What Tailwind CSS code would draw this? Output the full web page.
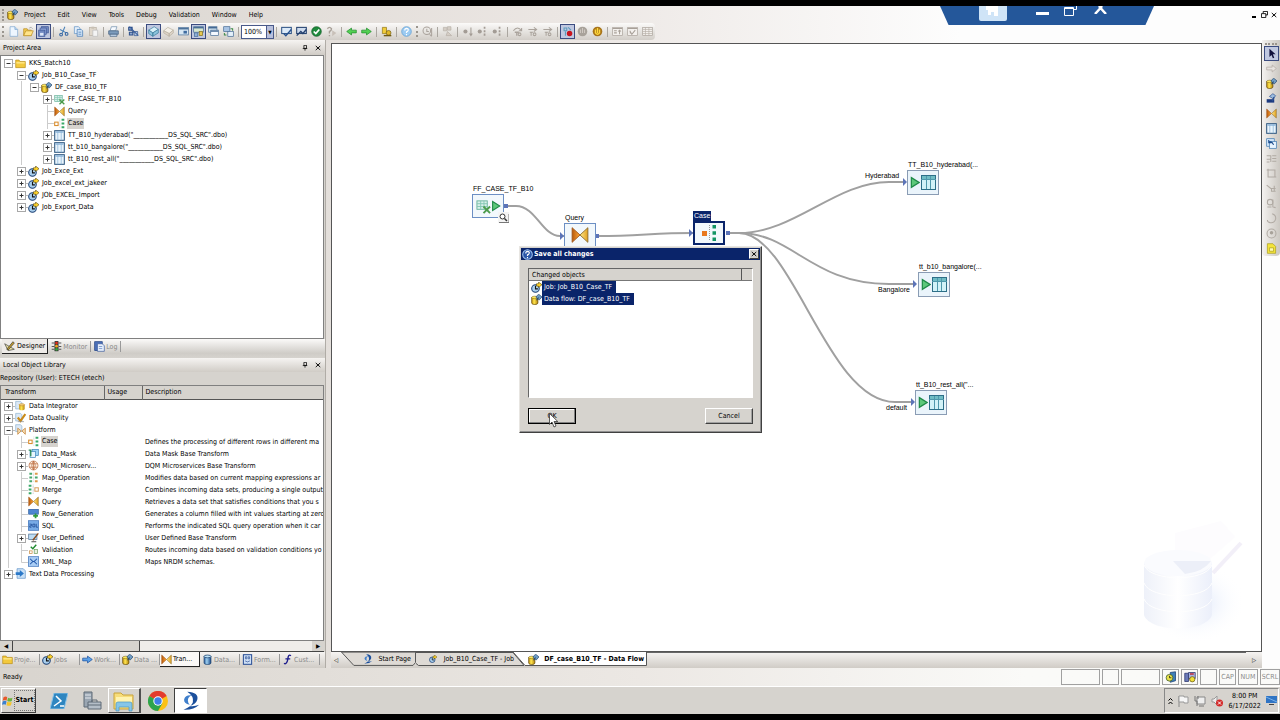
<!doctype html>
<html lang="en">
<head>
  <meta charset="UTF-8">
  <meta name="viewport" content="width=device-width, initial-scale=1.0">
  <title>Data Services Designer</title>
  <script src="https://cdn.jsdelivr.net/npm/@tailwindcss/browser@4"></script>
</head>
<body class="bg-black">
<!--Icon set-->
<svg class="absolute size-0">
  <defs>
    <linearGradient id="g-cyl" x1="0" x2="1"><stop offset="0" stop-color="#c8950f"/><stop offset=".4" stop-color="#ffe650"/><stop offset="1" stop-color="#b8860b"/></linearGradient>
    <linearGradient id="g-blue" x1="0" x2="1"><stop offset="0" stop-color="#2b5fa0"/><stop offset=".4" stop-color="#9fd0f0"/><stop offset="1" stop-color="#1c4a8a"/></linearGradient>
    <linearGradient id="g-wm" x1="0" x2="1"><stop offset="0" stop-color="#eef1f9"/><stop offset=".5" stop-color="#ffffff"/><stop offset="1" stop-color="#ebeffa"/></linearGradient>
    <radialGradient id="g-halo"><stop offset="0" stop-color="#dbe5fa"/><stop offset="1" stop-color="#ffffff" stop-opacity="0"/></radialGradient>
    <linearGradient id="g-or" x1="0" x2="1"><stop offset="0" stop-color="#b8590c"/><stop offset="1" stop-color="#ffa93a"/></linearGradient>
    <linearGradient id="g-ye" x1="0" x2="1"><stop offset="0" stop-color="#ffe98a"/><stop offset="1" stop-color="#e0a020"/></linearGradient>
  </defs>
  <symbol id="plus" viewBox="0 0 13 12"><path d="M11 6.500h2" stroke="#bbb"/><rect x="2.500" y="2.500" width="8" height="8" fill="#fff" stroke="#a8a8a8"/><path d="M4.500 6.500h4M6.500 4.500v4" stroke="#333"/></symbol>
  <symbol id="minus" viewBox="0 0 13 12"><path d="M11 6.500h2" stroke="#bbb"/><rect x="2.500" y="2.500" width="8" height="8" fill="#fff" stroke="#a8a8a8"/><path d="M4.500 6.500h4" stroke="#333"/></symbol>
  <symbol id="line" viewBox="0 0 13 12"><path d="M6.500 0v12" stroke="#ccc"/></symbol>
  <symbol id="tee" viewBox="0 0 13 12"><path d="M6.500 0v12M6.500 6.500h6.500" stroke="#ccc"/></symbol>
  <symbol id="elbow" viewBox="0 0 13 12"><path d="M6.500 0v6.500h6.500" stroke="#ccc" fill="none"/></symbol>
  <symbol id="folder" viewBox="0 0 16 16"><path d="M1 3h5l1 2h8v9H1z" fill="#f3c93c" stroke="#b88d1c"/><path d="M2 7h12" stroke="#ffe88a" stroke-width="2"/></symbol>
  <symbol id="job" viewBox="0 0 16 16"><circle cx="6.500" cy="9.500" r="5.500" fill="#a9cfee" stroke="#1b3f73" stroke-width="1.500"/><path d="M6.500 5.500v4.500h3.500" stroke="#111" fill="none" stroke-width="1.500"/><path d="M8 6V2.500h3V0l5 4-5 4V6z" fill="#ffd42a" stroke="#4a3800" stroke-width=".8"/></symbol>
  <symbol id="flow" viewBox="0 0 16 16"><path d="M1 5v8c0 3 9 3 9 0V5z" fill="url(#g-cyl)" stroke="#5a4200"/><ellipse cx="5.500" cy="5" rx="4.500" ry="1.800" fill="#ffe95a" stroke="#5a4200" stroke-width=".6"/><path d="M7 4.500l4-4.300 5 4-4 4.500z" fill="#6f9cc4" stroke="#24486e"/><path d="M8 9l3-4" stroke="#24486e" stroke-width="1.500"/></symbol>
  <symbol id="file" viewBox="0 0 16 16"><rect x="1" y="2" width="11" height="9" fill="#d9f0ea" stroke="#6ab49c"/><path d="M1 5h11M1 8h11M5 2v9M8.500 2v9" stroke="#84c8b4"/><path d="M8 8l7 7M15 8l-7 7" stroke="#4b9b4b" stroke-width="2"/></symbol>
  <symbol id="query" viewBox="0 0 16 16"><path d="M1 1.500L8 8l-7 6.500z" fill="url(#g-or)" stroke="#a0561a" stroke-width=".8"/><path d="M15 1.500L8 8l7 6.500z" fill="url(#g-ye)" stroke="#8a6a2a" stroke-width=".8"/></symbol>
  <symbol id="case" viewBox="0 0 16 16"><rect x="1" y="6" width="5" height="5" fill="#fff" stroke="#d88a28" stroke-width="1.500"/><path d="M8.500 1v14" stroke="#bbb" stroke-dasharray="1 1"/><path d="M11 1h4v3h-4zM11 6.500h4v3h-4zM11 12h4v3h-4z" fill="#38a868"/></symbol>
  <symbol id="casebig" viewBox="0 0 16 16"><rect x="1" y="6" width="5" height="5" fill="#e8781e"/><path d="M8.500 0v16" stroke="#999" stroke-dasharray="1 1"/><path d="M11.500 0h3.500v3.500h-3.500zM11.500 6.200h3.500v3.500h-3.500zM11.500 12.500h3.500v3.500h-3.500z" fill="#129464"/></symbol>
  <symbol id="table" viewBox="0 0 16 16"><rect x="1" y="1" width="14" height="14" fill="#e9f4fc" stroke="#2d567f" stroke-width="1.500"/><path d="M2 3h12" stroke="#8db6da" stroke-width="2"/><path d="M5.500 2v13M10.500 2v13" stroke="#86b2d8"/></symbol>
  <symbol id="grp1" viewBox="0 0 16 16"><path d="M1 2h7l2 2v9H1z" fill="#dce9f6" stroke="#8fb2d0"/><path d="M6 7v6c0 2.500 8 2.500 8 0V7z" fill="url(#g-cyl)"/><ellipse cx="10" cy="7" rx="4" ry="1.500" fill="#f9d98a" stroke="#c08a2a"/></symbol>
  <symbol id="grp2" viewBox="0 0 16 16"><path d="M1 2h7l2 2v9H1z" fill="#dce9f6" stroke="#8fb2d0"/><path d="M4 8l4 5 7-10" stroke="#c98a1a" stroke-width="3" fill="none"/><path d="M4 14h9" stroke="#888"/></symbol>
  <symbol id="grp3" viewBox="0 0 16 16"><path d="M1 1h7l2 2v8H1z" fill="#dce9f6" stroke="#8fb2d0"/><path d="M4 6l5 4-5 5zM15 6l-5 4 5 5z" fill="#f5dcb0" stroke="#c07a2a"/></symbol>
  <symbol id="grp4" viewBox="0 0 16 16"><path d="M3 1h9l3 3v11H3z" fill="#c9e0f6" stroke="#5d92c8"/><path d="M1 6h6V3l6 5-6 5v-3H1z" fill="#2a78c8"/></symbol>
  <symbol id="mask" viewBox="0 0 16 16"><rect x="6" y="2" width="9" height="9" fill="#9fd4f4" stroke="#3a82b8"/><rect x="3" y="5" width="8" height="9" fill="#e8f6ff" stroke="#3a82b8"/><path d="M1 3h3v9" stroke="#2e8b57" stroke-width="2" fill="none"/></symbol>
  <symbol id="globe" viewBox="0 0 16 16"><circle cx="8" cy="8" r="6.500" fill="#fdf0e2" stroke="#b9683a"/><path d="M2 5.500h12M2 10.500h12M8 1.500v13M8 1.500q-5 6.500 0 13M8 1.500q5 6.500 0 13" stroke="#b9683a" fill="none"/></symbol>
  <symbol id="mapop" viewBox="0 0 16 16"><path d="M2 1h4v3H2zM2 6.500h4v3H2zM2 12h4v3H2z" fill="#4aa870"/><path d="M10 1h4v3h-4zM10 12h4v3h-4z" fill="#e09a4a"/><path d="M10 6.500h4v3h-4z" fill="#4aa870"/><path d="M8 1v14" stroke="#bbb" stroke-dasharray="1 1"/></symbol>
  <symbol id="merge" viewBox="0 0 16 16"><path d="M1 1h4v3H1zM1 6.500h4v3H1zM1 12h4v3H1z" fill="#38a868"/><path d="M7.500 1v14" stroke="#999" stroke-dasharray="1 1"/><rect x="10" y="5.500" width="5" height="5" fill="#fff" stroke="#d8a060" stroke-width="1.500"/></symbol>
  <symbol id="rowgen" viewBox="0 0 16 16"><rect x="1" y="2" width="14" height="7" fill="#4c86d0" stroke="#2a5ca0"/><path d="M11 8v7M7.500 11.500h7" stroke="#2e9a3a" stroke-width="2.500"/></symbol>
  <symbol id="sql" viewBox="0 0 16 16"><rect x=".5" y="1" width="15" height="14" fill="#78abe6" stroke="#3a70b8"/><path d="M2 6h3v2.500H2.500v2H5M7 6h3v4H7zM12 5.500v5h2.500" stroke="#123f8a" fill="none"/></symbol>
  <symbol id="userdef" viewBox="0 0 16 16"><rect x="1" y="3" width="12" height="8" fill="#bcdcf4" stroke="#4a6c92"/><path d="M5 14h7" stroke="#777" stroke-width="2"/><path d="M7 12l8-10" stroke="#8a4a1a" stroke-width="2"/></symbol>
  <symbol id="valid" viewBox="0 0 16 16"><path d="M4 4l3 3 5-6" stroke="#1e8a2e" stroke-width="2" fill="none"/><rect x="2" y="10" width="4" height="4" fill="#fff" stroke="#c9883a"/><rect x="9" y="8" width="5" height="6" fill="#e8f0e0" stroke="#6a9a5a"/></symbol>
  <symbol id="xml" viewBox="0 0 16 16"><rect x=".5" y="1" width="15" height="14" fill="#a8ccf4" stroke="#3a70b8"/><path d="M3 4l4 4-4 4M13 4L9 8l4 4M7 8h2" stroke="#1c54a8" fill="none" stroke-width="1.500"/></symbol>
  <symbol id="db" viewBox="0 0 16 16"><path d="M3 3v10c0 3 10 3 10 0V3z" fill="url(#g-blue)" stroke="#153a66"/><ellipse cx="8" cy="3.500" rx="5" ry="2" fill="#bfe2f8" stroke="#153a66"/></symbol>
  <symbol id="format" viewBox="0 0 16 16"><rect x="2" y="1" width="12" height="14" fill="#cfe0f6" stroke="#2a4f96" stroke-width="1.500"/><path d="M5 4h2v3H5zM9 4h2v3H9zM4.500 10q3.500 3 7 0" fill="none" stroke="#2a4f96"/></symbol>
  <symbol id="fx" viewBox="0 0 16 16"><path d="M13 2.500C10 0 9 3 8.500 7S6 16 3 13.500M5 7h7" stroke="#1c1c8c" stroke-width="2" fill="none"/></symbol>
  <symbol id="arrow" viewBox="0 0 16 16"><path d="M1 6h7V3l7 5-7 5v-3H1z" fill="#5aa0e8" stroke="#1c4f9a"/></symbol>
  <symbol id="swirl" viewBox="0 0 16 16"><path d="M5 .5q9.500.5 8 6.500-1 3.500-6 5 4 .5 7.500-1Q10 15.500 2 15q6.500-2.500 7.500-6Q10.500 4 5 .5z" fill="#1b4f9c"/><path d="M8.500 3.500Q5.500 4.500 5.500 7.500q0 2 1.500 3.500Q2 10 2.500 6.500 3.500 3 8.500 3.500z" fill="#3f7fcc"/></symbol>
  <symbol id="design" viewBox="0 0 16 16"><path d="M1 4l5 10 9-2z" fill="#e8e0a0" stroke="#444"/><path d="M4 12l9-11 2 2-9 10z" fill="#c9a02a" stroke="#333"/></symbol>
  <symbol id="monitor" viewBox="0 0 16 16"><rect x="5" y="0" width="6" height="15" rx="1" fill="#3c3c3c"/><path d="M1 3h4M1 8h4M11 3h4M11 8h4M1 12h4M11 12h4" stroke="#555" stroke-width="1.500"/><circle cx="8" cy="3" r="2" fill="#e02a1a"/><circle cx="8" cy="7.500" r="2" fill="#f0a81a"/><circle cx="8" cy="12" r="2" fill="#35a83a"/></symbol>
  <symbol id="log" viewBox="0 0 16 16"><rect x="1" y="1" width="11" height="13" fill="#4a6fb8" stroke="#1f3f80"/><path d="M5 4h7l3 3v8H5z" fill="#e8f0fc" stroke="#3a5a9a"/><path d="M7 8h5M7 11h5" stroke="#5a80c0"/></symbol>
  <symbol id="pin" viewBox="0 0 16 16"><path d="M5 1h7v8H5zM2 9.500h12M8 10v5" stroke="#000" stroke-width="2" fill="none"/></symbol>
  <symbol id="close" viewBox="0 0 16 16"><path d="M2 2.500l12 11M14 2.500l-12 11" stroke="#000" stroke-width="2.500"/></symbol>
  <symbol id="new" viewBox="0 0 16 16"><path d="M3 1h7l4 4v10H3z" fill="#eef6ff" stroke="#7fa8d0"/><path d="M10 1v4h4" fill="#bcd6f0" stroke="#7fa8d0"/></symbol>
  <symbol id="open" viewBox="0 0 16 16"><path d="M1 4h5l1 2h5v8H1z" fill="#f4cc50" stroke="#b88a20"/><path d="M1 14l3-7h11l-3 7z" fill="#ffe48a" stroke="#b88a20"/><path d="M9 3q3-3 5 1" stroke="#999" fill="none"/></symbol>
  <symbol id="saveall" viewBox="0 0 16 16"><rect x="5" y="1" width="10" height="9" fill="#7088c0" stroke="#3c5594"/><rect x="3" y="3" width="9" height="9" fill="#93aadb" stroke="#3c5594"/><rect x="1" y="6" width="9" height="9" fill="#7088c0" stroke="#3c5594"/><rect x="3" y="10" width="5" height="4" fill="#dfe8f8"/></symbol>
  <symbol id="cut" viewBox="0 0 16 16"><path d="M10 1L6 11M3 5l9 5" stroke="#4a80b8" stroke-width="1.500"/><circle cx="4.500" cy="12.500" r="2" fill="none" stroke="#2f62a0" stroke-width="1.500"/><circle cx="12.500" cy="11.500" r="2" fill="none" stroke="#2f62a0" stroke-width="1.500"/></symbol>
  <symbol id="copy" viewBox="0 0 16 16"><path d="M2 1h6l2 2v8H2z" fill="#e4effa" stroke="#5d90c4"/><path d="M6 5h6l2 2v8H6z" fill="#cfe2f6" stroke="#3f78b4"/><path d="M8 9h4M8 12h4" stroke="#3f78b4"/></symbol>
  <symbol id="paste" viewBox="0 0 16 16"><rect x="2" y="2" width="10" height="12" fill="#e0d8cc" stroke="#b8b0a4"/><path d="M5 1h4v3H5z" fill="#c8c0b4"/><path d="M7 6h7v9H7z" fill="#f4f4f4" stroke="#bbb"/></symbol>
  <symbol id="print" viewBox="0 0 16 16"><path d="M5 1h8l-2 6H3z" fill="#f6faff" stroke="#6d8cab"/><path d="M1 7h14v5H1z" fill="#7d9cbc" stroke="#3e5a7a"/><path d="M3 12h10v3H3z" fill="#c8dcf0" stroke="#3e5a7a"/></symbol>
  <symbol id="where" viewBox="0 0 16 16"><path d="M1 2h5v4H1zM5 6l5 4M2 9h5v4H2z" stroke="#2d4f8a" stroke-width="1.500" fill="#8fa8d0"/><path d="M9 8h5v6H9z" fill="#b8cce8" stroke="#2d4f8a"/><path d="M2 1l13 13" stroke="#3a5f9c" stroke-width="1.500"/></symbol>
  <symbol id="jobdb" viewBox="0 0 16 16"><path d="M7 2l7-1v12l-7 2z" fill="#3f7fb8" stroke="#1b3f73"/><circle cx="6" cy="9" r="4.500" fill="#e8e04a" stroke="#3a5a2a"/><path d="M6 6.500V9h2.500" stroke="#111" fill="none"/></symbol>
  <symbol id="sched" viewBox="0 0 16 16"><path d="M1 3h5v11H1z" fill="#6a7ab8" stroke="#2a346c"/><path d="M6 2h9v8H6z" fill="#a8b4e0" stroke="#2a346c"/><path d="M8 4h5" stroke="#c02a3a" stroke-width="2"/><circle cx="11" cy="11" r="3.500" fill="#f0e03a" stroke="#6a5a10"/></symbol>
  <symbol id="cube" viewBox="0 0 16 16"><path d="M1 6l8-5 6 4-8 5z" fill="#d8f0f8" stroke="#3a7c9c"/><path d="M1 6v5l6 4v-5zM7 10l8-5v5l-8 5z" fill="#8cc4dc" stroke="#3a7c9c"/></symbol>
  <symbol id="cubeoff" viewBox="0 0 16 16"><path d="M1 7l6-5 8 4-6 5z" fill="#f4f0e8" stroke="#b8b0a0"/><path d="M1 7v3l8 5v-4zM9 11l6-5v4l-6 5z" fill="#ddd4c8" stroke="#b8b0a0"/></symbol>
  <symbol id="win" viewBox="0 0 16 16"><rect x="1" y="2" width="14" height="11" fill="#d8e8f4" stroke="#446a94"/><path d="M1 4h14" stroke="#446a94" stroke-width="2"/><rect x="8" y="7" width="5" height="4" fill="#3f6ca0"/></symbol>
  <symbol id="wins" viewBox="0 0 16 16"><rect x="1" y="1" width="14" height="8" fill="#d8e8d0" stroke="#446a94"/><path d="M1 2.500h14" stroke="#446a94" stroke-width="2"/><rect x="2" y="10" width="5" height="5" fill="#8fb0d8" stroke="#446a94"/><rect x="9" y="8" width="5" height="6" fill="#e8c850" stroke="#807020"/></symbol>
  <symbol id="cascade" viewBox="0 0 16 16"><rect x="1" y="1" width="12" height="8" fill="#d8e8f4" stroke="#446a94"/><rect x="4" y="6" width="11" height="8" fill="#f4f9ff" stroke="#446a94"/><path d="M1 2.500h12M4 7.500h11" stroke="#446a94" stroke-width="2"/></symbol>
  <symbol id="tile" viewBox="0 0 16 16"><rect x="1" y="1" width="9" height="7" fill="#a8c4e4" stroke="#446a94"/><rect x="7" y="8" width="8" height="7" fill="#e4f0fa" stroke="#446a94"/><path d="M11 4h3v3M2 10v3h3" stroke="#3f8a4a" stroke-width="1.500" fill="none"/></symbol>
  <symbol id="chk" viewBox="0 0 16 16"><rect x="1" y="2" width="14" height="9" fill="#dceaf8" stroke="#2f5486" stroke-width="1.500"/><path d="M4 11l3 3 8-9" stroke="#24508f" stroke-width="2" fill="none"/></symbol>
  <symbol id="chk2" viewBox="0 0 16 16"><rect x="1" y="2" width="14" height="9" fill="#cfdcee" stroke="#22406e" stroke-width="1.500"/><path d="M1 14l6-6 3 3 5-6" stroke="#24406f" stroke-width="2" fill="none"/></symbol>
  <symbol id="ok" viewBox="0 0 16 16"><circle cx="8" cy="8" r="7" fill="#1f8a3c" stroke="#0e5a24"/><path d="M4 8l3 3 5-6" stroke="#fff" stroke-width="2.500" fill="none"/></symbol>
  <symbol id="helpoff" viewBox="0 0 16 16"><path d="M2 4q3-4 6 0 0 3-3 4v3M5 13v2" stroke="#a8a098" stroke-width="2" fill="none"/><path d="M9 6l6 4-6 5z" fill="#c8c0b8"/></symbol>
  <symbol id="left" viewBox="0 0 16 16"><path d="M15 6H8V3L1 8l7 5v-3h7z" fill="#52d052" stroke="#1f8a2a"/></symbol>
  <symbol id="right" viewBox="0 0 16 16"><path d="M1 6h7V3l7 5-7 5v-3H1z" fill="#52d052" stroke="#1f8a2a"/></symbol>
  <symbol id="gold" viewBox="0 0 16 16"><path d="M2 2h6v9H2z" fill="#f0cc3a" stroke="#907414"/><circle cx="11" cy="10" r="3.500" fill="#e0b82a" stroke="#705a10"/><path d="M4 14h11" stroke="#705a10" stroke-width="2"/></symbol>
  <symbol id="help" viewBox="0 0 16 16"><circle cx="8" cy="8" r="7" fill="#9ccbf2" stroke="#5b9bd0"/><path d="M5.500 6.500q0-3 2.700-3 2.600.2 2.300 2.500Q10 8 8 8.500V10M8 11.500v2" stroke="#fff" stroke-width="1.700" fill="none"/></symbol>
  <symbol id="ask" viewBox="0 0 16 16"><circle cx="8" cy="8" r="7" fill="#2a56a8" stroke="#9cc0ee" stroke-width="1.500"/><path d="M5.500 6.500q0-3 2.700-3 2.600.2 2.300 2.500Q10 8 8 8.500V10M8 11.500v2" stroke="#fff" stroke-width="1.700" fill="none"/></symbol>
  <symbol id="clockoff" viewBox="0 0 16 16"><circle cx="7" cy="7" r="5.500" fill="none" stroke="#aaa39c" stroke-width="1.500"/><path d="M7 4v4h3M14 3v11M11 12l3 3" stroke="#aaa39c" stroke-width="1.500" fill="none"/></symbol>
  <symbol id="nodeoff" viewBox="0 0 16 16"><path d="M2 2h5v5H2zM8 1h5v5H8zM8 8l6 6H6z" fill="#d4cdc5" stroke="#b8b0a8"/></symbol>
  <symbol id="step1" viewBox="0 0 16 16"><circle cx="5" cy="8" r="3" fill="#a39c95"/><path d="M13 2v12M11 11l2 3 2-3" stroke="#a39c95" stroke-width="1.500" fill="none"/></symbol>
  <symbol id="step2" viewBox="0 0 16 16"><circle cx="4" cy="8" r="3" fill="#a39c95"/><path d="M11 1v14" stroke="#a39c95" stroke-width="2.500" stroke-dasharray="3 2"/></symbol>
  <symbol id="hop" viewBox="0 0 16 16"><path d="M2 7q6-8 12 0M14 3v4h-4" stroke="#aaa39c" stroke-width="1.500" fill="none"/><path d="M4 9h6M7 9v5" stroke="#aaa39c" stroke-width="2"/><circle cx="11" cy="12" r="2" fill="none" stroke="#aaa39c" stroke-width="1.500"/></symbol>
  <symbol id="hop2" viewBox="0 0 16 16"><path d="M2 5h11M10 2l4 3-4 3M4 9h5M6 9v5" stroke="#aaa39c" stroke-width="1.500" fill="none"/><circle cx="11" cy="12" r="2" fill="none" stroke="#aaa39c" stroke-width="1.500"/></symbol>
  <symbol id="debug" viewBox="0 0 16 16"><path d="M3 3h4v4H3zM9 2l4 4M5 8v6" stroke="#5a9abc" stroke-width="1.500" fill="none"/><circle cx="11" cy="11" r="4" fill="#c8141e"/></symbol>
  <symbol id="handoff" viewBox="0 0 16 16"><circle cx="8" cy="8" r="7" fill="#a8a29a"/><path d="M5 5v5M8 3v7M11 5v5" stroke="#cfc9c2" stroke-width="1.500"/></symbol>
  <symbol id="hand" viewBox="0 0 16 16"><circle cx="8" cy="8" r="7" fill="#a8741a"/><path d="M5 5v5q3 4 6 0V5M8 3v7" stroke="#ffd83a" stroke-width="2" fill="none"/></symbol>
  <symbol id="gridoff" viewBox="0 0 16 16"><rect x="1" y="2" width="14" height="12" fill="#f4f1ee" stroke="#a8a098"/><path d="M1 5h14M1 8h14M1 11h14M5 2v12M10 2v12" stroke="#b8b0a8"/></symbol>
  <symbol id="varoff" viewBox="0 0 16 16"><rect x="1" y="2" width="14" height="12" fill="#f4f1ee" stroke="#a8a098"/><path d="M1 3.500h14M3 7h4M3 10h4M11 12V6M9 8l2-2 2 2" stroke="#a8a098" stroke-width="1.500" fill="none"/></symbol>
  <symbol id="winoff" viewBox="0 0 16 16"><rect x="1" y="2" width="14" height="12" fill="#f4f1ee" stroke="#a8a098"/><path d="M1 3.500h14M4 7l3 5 5-6M4 10h2" stroke="#a8a098" stroke-width="1.500" fill="none"/></symbol>
  <symbol id="pointer" viewBox="0 0 16 16"><path d="M5 1v12l3-3 2 5 2-1-2-5h4z" fill="#10103c"/></symbol>
  <symbol id="arrowoff" viewBox="0 0 16 16"><path d="M1 6h8V3l6 5-6 5v-3H1z" fill="#e8e4e0" stroke="#b0a8a0"/></symbol>
  <symbol id="flowblue" viewBox="0 0 16 16"><path d="M1 9h11v5H1z" fill="#1c3a80"/><path d="M5 5l5-4 4 3-4 4z" fill="#9cbde0" stroke="#2a4f90"/><path d="M12 6l-3 6" stroke="#2a4f90" stroke-width="2"/></symbol>
  <symbol id="tmpl" viewBox="0 0 16 16"><rect x="1" y="1" width="11" height="11" fill="#cfe4f8" stroke="#3e78b0"/><rect x="5" y="5" width="10" height="10" fill="#e8f4ff" stroke="#3e78b0"/><path d="M4 7q4-4 7 3M4 3v4h4" stroke="#1a4a8a" stroke-width="1.500" fill="none"/></symbol>
  <symbol id="o1" viewBox="0 0 16 16"><path d="M1 4h6v9M9 4h6M9 8h6M9 12h6M1 9h6M1 13h4" stroke="#b0aaa3" stroke-width="1.500" fill="none"/></symbol>
  <symbol id="o2" viewBox="0 0 16 16"><path d="M3 3h10v10H3zM1 3h2M13 13h2M3 1v2" stroke="#b0aaa3" stroke-width="1.500" fill="none"/></symbol>
  <symbol id="o3" viewBox="0 0 16 16"><path d="M1 3l6 5h7M8 8v4h6M12 4v8" stroke="#b0aaa3" stroke-width="1.500" fill="none"/></symbol>
  <symbol id="o4" viewBox="0 0 16 16"><circle cx="6" cy="6" r="4" fill="none" stroke="#b0aaa3" stroke-width="1.500"/><path d="M10 2v11l4 1M2 13h6" stroke="#b0aaa3" stroke-width="1.500" fill="none"/></symbol>
  <symbol id="o5" viewBox="0 0 16 16"><path d="M9 1q6 2 5 8-2 6-8 5-4-1-4-4" stroke="#b0aaa3" stroke-width="1.500" fill="none"/></symbol>
  <symbol id="o6" viewBox="0 0 16 16"><circle cx="8" cy="8" r="6.500" fill="none" stroke="#b0aaa3" stroke-width="1.500"/><circle cx="8" cy="7" r="2.500" fill="#a8a29a"/></symbol>
  <symbol id="note" viewBox="0 0 16 16"><path d="M2 1h8l4 4v10H2z" fill="#f4e43a" stroke="#a89a1a"/><path d="M5 7h6v5H5z" fill="#fffbb0" stroke="#a89a1a"/></symbol>
  <symbol id="play" viewBox="0 0 12 16"><path d="M1.500 2l9.500 6-9.500 6z" fill="#5cc87a" stroke="#1f8a48" stroke-width="1.500"/></symbol>
  <symbol id="tbl" viewBox="0 0 15 15"><rect x=".5" y=".5" width="14" height="14" fill="#d2f2f8" stroke="#2d6f88"/><path d="M1 2.500h13" stroke="#6fbcc4" stroke-width="3"/><path d="M0 4.500h15M5.500 1v13M9.500 1v13" stroke="#4f98ac"/></symbol>
</svg>

<div class="flex h-screen flex-col font-['DejaVu_Sans_Condensed','Noto_Sans',sans-serif] text-[7px] leading-[12px] text-black">
  <div class="h-1.5 shrink-0 bg-black"></div>
  <div class="relative flex min-h-0 flex-1 flex-col bg-linear-to-r from-[#d8d4ce] via-[#ece7e4] via-45% to-[#fdfdfd] to-75%">
    <!--Menu bar-->
    <nav class="flex h-[17px] shrink-0 items-center pl-[2px]">
      <span class="mr-[3px] h-3 border-l-2 border-dotted border-[#9a958e]"></span>
      <svg class="size-[11px]"><use href="#flow"/></svg>
      <div id="menus" class="flex flex-1"></div>
      <div class="flex items-center gap-[3px] pr-[3px]">
        <button aria-label="Minimize" class="flex h-2 w-[6px] items-end"><span class="mb-px h-[2px] w-1 bg-black"></span></button>
        <button aria-label="Restore"><svg class="size-[7px]" viewBox="0 0 8 8"><path d="M2.500 2.500v-2h5v4h-2M.5 3h5v4.500h-5z" fill="none" stroke="#000"/></svg></button>
        <button aria-label="Close"><svg class="size-[6px]"><use href="#close"/></svg></button>
      </div>
    </nav>
    <!--Toolbar-->
    <div class="flex h-[17px] w-max shrink-0 items-center rounded-r bg-linear-to-b from-[#fbfaf9] to-[#d2cec8]">
      <div id="tools1" class="flex items-center"></div>
      <div class="relative w-[33px]">
        <select aria-label="Zoom" class="h-[14px] w-full appearance-none border border-[#4a5a8a] bg-white pl-[2px] leading-[12px]"><option>100%</option></select>
        <span class="pointer-events-none absolute inset-y-0 right-0 flex w-2 items-center justify-center border border-[#4a5a8a] bg-[#b8c0dc] text-[5px]">▼</span>
      </div>
      <div id="tools2" class="flex items-center"></div>
    </div>

    <div class="flex min-h-0 flex-1">
      <!--Left dock-->
      <aside class="grid w-[326px] shrink-0 grid-rows-[318fr_310fr] border-r border-[#b0aca6] bg-[#d6d3ce]">
        <section class="flex min-h-0 flex-col">
          <header class="flex h-[15px] shrink-0 items-center gap-[7px] bg-linear-to-b from-[#f6f4f2] to-[#d0ccc6] pr-1 pl-[3px]">
            <h2 class="flex-1">Project Area</h2>
            <button aria-label="Auto hide"><svg class="size-[6px]"><use href="#pin"/></svg></button>
            <button aria-label="Close panel"><svg class="size-[6px]"><use href="#close"/></svg></button>
          </header>
          <div id="project" class="mr-px min-h-0 flex-1 overflow-hidden border border-[#808080] bg-white pt-[1px] pl-px"></div>
          <div id="areaTabs" class="flex h-[19px] shrink-0 bg-linear-to-b from-[#fbfaf9] via-[#cfccc7] via-75% to-[#d6d3ce] pl-[2px]"></div>
        </section>
        <section class="flex min-h-0 flex-col">
          <header class="flex h-[14px] shrink-0 items-center gap-[7px] bg-linear-to-b from-[#f6f4f2] to-[#d0ccc6] pr-1 pl-[3px]">
            <h2 class="flex-1">Local Object Library</h2>
            <button aria-label="Auto hide"><svg class="size-[6px]"><use href="#pin"/></svg></button>
            <button aria-label="Close panel"><svg class="size-[6px]"><use href="#close"/></svg></button>
          </header>
          <p class="h-[13px] shrink-0">Repository (User): ETECH (etech)</p>
          <div class="mr-px min-h-0 flex-1 overflow-hidden border border-[#808080] bg-white">
            <table class="w-full table-fixed border-collapse">
              <thead class="bg-[#d6d3ce] text-left">
                <tr class="h-[13px] border-b border-[#555]">
                  <th class="w-[103px] border-r border-[#666] pl-1 font-normal">Transform</th>
                  <th class="w-[38px] border-r border-[#666] pl-[3px] font-normal">Usage</th>
                  <th class="pl-[3px] font-normal">Description</th>
                </tr>
              </thead>
              <tbody id="library"></tbody>
            </table>
          </div>
          <div class="mr-px flex h-[11px] shrink-0 items-stretch border-b border-[#444] bg-[#efedea]">
            <button aria-label="Scroll left" class="w-3 bg-[#d6d3ce] text-[6px] leading-[10px]">◀</button>
            <span class="w-[128px] border-r border-l border-[#444] bg-[#d6d3ce]"></span>
            <span class="flex-1"></span>
            <button aria-label="Scroll right" class="w-3 bg-[#d6d3ce] text-[6px] leading-[10px]">▶</button>
          </div>
          <div id="libTabs" class="flex h-[16px] shrink-0 bg-linear-to-b from-[#f6f4f2] to-[#d0ccc6]"></div>
        </section>
      </aside>

      <!--Workspace-->
      <main class="ml-[5px] flex min-w-0 flex-1 flex-col pt-[3px]">
        <div class="relative min-h-0 flex-1 overflow-hidden border border-[#555] bg-white">
          <!--Watermark-->
          <svg class="absolute right-[6px] bottom-[8px] h-[124px] w-[112px]" viewBox="0 0 112 124">
            <ellipse cx="52" cy="84" rx="50" ry="40" fill="url(#g-halo)"/>
            <path d="M32 14l46-12 14 16-30 26-30 2z" fill="#fdfcfe"/>
            <path d="M98 24L70 54" stroke="#f2eff8" stroke-width="4"/>
            <path d="M1 44v52c6 18 62 18 68 0V44z" fill="url(#g-wm)"/>
            <ellipse cx="35" cy="44" rx="34" ry="13" fill="#fafbfe"/>
            <path d="M30 42h38q-8 11-26 13z" fill="#eceff8"/>
            <path d="M1 46c6 17 62 17 68 0M1 64c6 17 62 17 68 0M1 80c6 17 62 17 68 0" stroke="#fff" fill="none"/>
          </svg>
          <!--Links between the nodes-->
          <svg class="absolute top-0 left-0 h-full w-full">
            <g fill="none" stroke="#a0a0a0" stroke-width="2">
              <path d="M175 162h9c20 0 26 30 44 30h4"/>
              <path d="M266 192c40 0 56-3 95-3"/>
              <path d="M395 189h12c56 0 96-51 150-51h16"/>
              <path d="M395 189h12c54 0 72 51 150 51h24"/>
              <path d="M395 189h12c54 0 88 169 156 169h16"/>
            </g>
            <path d="M228 188l4 4-4 4zM357 185l4 4-4 4zM571 134l4 4-4 4zM581 236l4 4-4 4zM579 354l4 4-4 4zM172 160h4v4h-4zM263 190h4v4h-4zM394 187h4v4h-4z" fill="#5c74b8"/>
          </svg>
          <!--Source-->
          <div class="absolute top-[140px] left-[140px] font-['Liberation_Sans',sans-serif] leading-[10px]">
            <p class="pl-px">FF_CASE_TF_B10</p>
            <div class="relative flex h-6 w-8 items-center justify-center border border-[#6c8fc4] bg-[#f2f8fc]">
              <svg class="size-[15px]"><use href="#file"/></svg>
              <svg class="h-3 w-[10px]"><use href="#play"/></svg>
              <svg class="absolute -right-[6px] -bottom-[6px] size-[11px]" viewBox="0 0 11 11"><rect width="11" height="11" fill="#f4f4f4"/><path d="M11 2v8.500H1" fill="none" stroke="#777"/><circle cx="4.500" cy="4.500" r="2.500" fill="#fff" stroke="#333"/><path d="M6.500 6.500l2.500 2.500" stroke="#333" stroke-width="1.500"/></svg>
            </div>
          </div>
          <div class="absolute top-[169px] left-[232px] font-['Liberation_Sans',sans-serif] leading-[10px]">
            <p class="pl-px">Query</p>
            <div class="flex h-6 w-8 items-center justify-center border border-[#6c8fc4] bg-[#f2f8fc]"><svg class="size-[18px]"><use href="#query"/></svg></div>
          </div>
          <div class="absolute top-[167px] left-[361px] font-['Liberation_Sans',sans-serif] leading-[10px]">
            <p class="w-max bg-[#0a246a] px-px text-white">Case</p>
            <div class="flex h-6 w-8 items-center justify-center border-2 border-[#0a246a] bg-[#f2f8fc]"><svg class="size-[16px]"><use href="#casebig"/></svg></div>
          </div>
          <!--Targets-->
          <div id="targets"></div>

          <!--Save dialog-->
          <div role="dialog" aria-labelledby="saveTitle" class="absolute top-[202px] left-[187px] flex w-[243px] flex-col border border-t-[#e8e6e2] border-r-[#404040] border-b-[#404040] border-l-[#e8e6e2] bg-[#d6d3ce] shadow-[inset_-1px_-1px_#909090]">
            <header class="m-px flex h-3 items-center gap-px bg-[#0a246a] px-px text-white">
              <svg class="size-[11px]"><use href="#ask"/></svg>
              <h2 id="saveTitle" class="flex-1 font-bold">Save all changes</h2>
              <button aria-label="Close dialog" class="flex size-[10px] items-center justify-center border border-r-[#404040] border-b-[#404040] border-white bg-[#d6d3ce]"><svg class="size-[6px]"><use href="#close"/></svg></button>
            </header>
            <div class="flex flex-col px-2 pt-[7px] pb-2">
              <div class="h-[130px] border border-t-[#666] border-r-white border-b-white border-l-[#666] bg-white">
                <div class="flex h-3 items-center border-b border-[#777] bg-[#d6d3ce]"><span class="flex-1 pl-[3px]">Changed objects</span><span class="h-full w-[11px] border-l border-[#555]"></span></div>
                <ul class="pl-[2px] text-white">
                  <li class="flex h-3 items-center"><svg class="size-[11px]"><use href="#job"/></svg><span class="h-3 bg-[#0a246a] pr-1 pl-[2px]">Job: Job_B10_Case_TF</span></li>
                  <li class="flex h-3 items-center"><svg class="size-[11px]"><use href="#flow"/></svg><span class="h-3 bg-[#0a246a] pr-1 pl-[2px]">Data flow: DF_case_B10_TF</span></li>
                </ul>
              </div>
              <div class="mt-[10px] flex justify-between">
                <button class="h-4 w-12 border border-black bg-[#d6d3ce] leading-[12px] shadow-[inset_-1px_-1px_#808080,inset_1px_1px_#fff]">OK</button>
                <button class="h-4 w-12 border border-t-white border-r-[#404040] border-b-[#404040] border-l-white bg-[#d6d3ce] leading-[12px] shadow-[inset_-1px_-1px_#a0a0a0]">Cancel</button>
              </div>
            </div>
          </div>
          <svg class="absolute top-[369px] left-[217px] h-[15px] w-[10px]" viewBox="0 0 10 15"><path d="M.5.5v11l2.500-2.500 2 5 2-1-2-4.500h3.800z" fill="#fff" stroke="#333" stroke-width=".8"/></svg>
        </div>
        <!--Document tabs-->
        <div class="flex h-4 shrink-0 items-center bg-linear-to-b from-[#f6f4f2] to-[#d0ccc6]">
          <button aria-label="Previous tab" class="w-[10px] text-[6px] leading-[12px]">◁</button>
          <div class="flex h-full items-start">
            <button class="relative flex h-[14px] w-[75px] items-center justify-end gap-[5px] pr-[5px] font-medium">
              <svg class="absolute inset-0 size-full" viewBox="0 0 76 14"><path d="M.5 0L13 13.500h60l2.500-3V0z" fill="#dedad5" stroke="#555"/></svg>
              <svg class="relative size-[10px]"><use href="#swirl"/></svg><span class="relative">Start Page</span>
            </button>
            <button class="relative flex h-[14px] w-[108px] items-center justify-end gap-[7px] pr-[10px] font-medium">
              <svg class="absolute inset-0 size-full" viewBox="0 0 108 14"><path d="M-.5 0v11l3 2.500H108L97 .5H0" fill="#dedad5" stroke="#555"/></svg>
              <svg class="relative size-[8px]"><use href="#job"/></svg><span class="relative">Job_B10_Case_TF - Job</span>
            </button>
            <button class="relative -ml-[11px] flex h-[14px] w-[134px] items-center justify-end gap-[5px] pr-[3px] font-bold">
              <svg class="absolute inset-0 size-full" viewBox="0 0 134 14"><path d="M0 0l12 13.500h121.500V0" fill="#fff" stroke="#555"/></svg>
              <svg class="relative size-[11px]"><use href="#flow"/></svg><span class="relative">DF_case_B10_TF - Data Flow</span>
            </button>
          </div>
          <span class="h-full flex-1 border-t border-[#666]"></span>
          <button aria-label="Next tab" class="w-4 text-[6px] leading-[12px]">▷</button>
        </div>
      </main>

      <!--Tool palette-->
      <div class="w-[18px] shrink-0 bg-[#fdfdfd]">
        <div id="palette" class="flex flex-col items-center rounded-b bg-linear-to-r from-[#f4f2f0] to-[#ccc8c2] pt-[2px]"></div>
      </div>
    </div>

    <!--Status bar-->
    <footer class="flex h-[18px] shrink-0 items-center gap-[2px] bg-linear-to-r from-[#d8d4ce] via-[#ece8e4] via-50% to-[#fafaf8] to-80% text-[#8a8a8a]">
      <span class="flex-1 pl-[3px] text-black">Ready</span>
      <span class="h-4 w-[39px] border border-[#a0a0a0]"></span>
      <span class="h-4 w-[17px] border border-[#a0a0a0]"></span>
      <span class="h-4 w-[39px] border border-[#a0a0a0]"></span>
      <span class="flex h-4 w-[17px] items-center justify-center border border-[#a0a0a0]"><svg class="size-3"><use href="#jobdb"/></svg></span>
      <span class="flex h-4 w-[17px] items-center justify-center border border-[#a0a0a0]"><svg class="size-3"><use href="#sched"/></svg></span>
      <span class="h-4 w-[17px] border border-[#a0a0a0]"></span>
      <span class="h-4 w-[17px] border border-[#a0a0a0] text-center leading-[15px]">CAP</span>
      <span class="h-4 w-5 border border-[#a0a0a0] text-center leading-[15px]">NUM</span>
      <span class="h-4 w-5 border border-[#a0a0a0] text-center leading-[15px]">SCRL</span>
    </footer>

    <!--Remote session bar-->
    <div class="absolute top-0 left-[940px] h-[19px] w-[214px] bg-[#24579a] [clip-path:polygon(0_0,100%_0,96%_100%,4%_100%)]">
      <span class="absolute top-0 left-[39px] h-[15px] w-[28px] rounded-b-xs bg-[#cfe4f7]"><svg class="mx-auto h-[10px] w-[14px]" viewBox="0 0 14 10"><path d="M0 0h12v10H8V6H5v3H2V4H0z" fill="#fff"/></svg></span>
      <button aria-label="Minimize session" class="absolute top-[6px] left-[96px] h-[3px] w-[13px] bg-white"></button>
      <button aria-label="Restore session" class="absolute top-0 left-[124px]"><svg class="h-[10px] w-[15px]" viewBox="0 0 15 10"><path d="M.5 1.500h9v8h-9zM.5 2.500h9M12.500 0v3.500H10" fill="none" stroke="#fff"/></svg></button>
      <button aria-label="Close session" class="absolute top-0 left-[154px]"><svg class="h-2 w-[13px]" viewBox="0 0 13 8"><path d="M1 8l5.500-6L12 8M5 0l1.500 2L8 0" fill="none" stroke="#fff" stroke-width="2.500"/></svg></button>
    </div>
  </div>

  <!--Taskbar-->
  <div class="flex h-7 shrink-0 items-center border-t border-white bg-[#d6d3ce] px-px">
    <button class="mr-[6px] flex h-[25px] w-[35px] items-center border border-t-white border-r-[#404040] border-b-[#404040] border-l-white font-bold">
      <svg class="size-3 shrink-0" viewBox="0 0 16 16"><path d="M2 3q3-2 5 0L6 7.500q-2-1.500-5 0z" fill="#e8582a"/><path d="M8 3.500q3 1.500 6 0L13 8q-3 1.500-6 0z" fill="#6cb33e"/><path d="M1 8.500q3-1.500 5 0L5 13q-2-1.500-5 0z" fill="#3a80d0"/><path d="M7 9q3 1.500 6 0l-1 4.500q-3 1.500-6 0z" fill="#f5c52a"/></svg>
      <span class="h-[21px] flex-1 border border-dotted border-[#777] text-center leading-[19px]">Start</span>
    </button>
    <button aria-label="PowerShell" class="flex h-[25px] w-[33px] items-center justify-center"><svg class="h-4 w-[18px]" viewBox="0 0 18 16"><path d="M4 0h14l-4 16H0z" fill="#2f86c0" stroke="#8cc4e8"/><path d="M6 3l5 5-7 5M10 13h4" stroke="#fff" stroke-width="1.500" fill="none"/></svg></button>
    <button aria-label="Server Manager" class="flex h-[25px] w-[33px] items-center justify-center"><svg class="size-5" viewBox="0 0 20 20"><path d="M2 1h8v15H2z" fill="#9aa6b2" stroke="#5e6a76"/><path d="M3 4h6M3 7h6" stroke="#e4e8ee"/><path d="M6 11h13v7H6z" fill="#b4bec8" stroke="#5e6a76"/><path d="M10 11V9h5v2M6 14h13" stroke="#5e6a76" fill="none"/></svg></button>
    <button aria-label="Explorer" class="flex h-[25px] w-[33px] items-center justify-center border border-t-white border-r-2 border-r-[#505050] border-b-[#505050] border-l-white"><svg class="size-[22px]" viewBox="0 0 22 22"><path d="M1 3h7l2 2h10v14H1z" fill="#f7dd7a" stroke="#c8a23a"/><path d="M3 7h16v6H3z" fill="#fff3b0"/><path d="M3 21v-7q0-2 2-2h12q2 0 2 2v7h-3v-4H6v4z" fill="#86c6e8" stroke="#4c96c0" stroke-width=".7"/></svg></button>
    <button aria-label="Chrome" class="flex h-[25px] w-[33px] items-center justify-center"><svg class="size-5" viewBox="0 0 20 20"><circle cx="10" cy="10" r="10" fill="#fbc116"/><path d="M10 10L1.300 5A10 10 0 0 1 18.700 5z" fill="#e33b2e"/><path d="M10 10L1.300 5A10 10 0 0 0 10 20l4.300-7.500z" fill="#2da44e"/><circle cx="10" cy="10" r="4.700" fill="#fff"/><circle cx="10" cy="10" r="3.700" fill="#3f7fe8"/></svg></button>
    <button aria-label="Designer" class="flex h-[25px] w-[33px] items-center justify-center border border-t-[#404040] border-r-white border-b-white border-l-[#404040] bg-white"><svg class="size-5"><use href="#swirl"/></svg></button>
    <span class="flex-1"></span>
    <div class="flex h-[25px] w-[115px] items-center justify-between border border-t-[#888] border-r-white border-b-white border-l-[#888] pr-px pl-[3px]">
      <svg class="h-2 w-[5px]" viewBox="0 0 5 8"><path d="M.5 3.500l2-2 2 2M.5 7l2-2 2 2" fill="none" stroke="#000"/></svg>
      <svg class="h-3 w-[11px]" viewBox="0 0 11 12"><path d="M1 1v11" stroke="#888"/><path d="M1 1h5v1h4v6H6V7H1z" fill="#f6f6f6" stroke="#999"/></svg>
      <svg class="size-3" viewBox="0 0 12 12"><path d="M3 2h8v7H3z" fill="#eee" stroke="#888"/><path d="M5 11h5M1 1v5h2v5M4 1v3" stroke="#777" fill="none"/></svg>
      <svg class="h-3 w-[12px]" viewBox="0 0 12 12"><path d="M1 4h2l3-3v9L3 7H1z" fill="#eee" stroke="#999"/><circle cx="8.500" cy="8" r="3.500" fill="#d42a2a"/><path d="M7 6.500l3 3M10 6.500l-3 3" stroke="#fff"/></svg>
      <div class="text-center leading-[10px]"><p>8:00 PM</p><p>6/17/2022</p></div>
      <svg class="h-[10px] w-[11px]" viewBox="0 0 11 10"><rect width="11" height="7" fill="#2f74c4"/><path d="M0 1l11 5" stroke="#7ab4ec"/><path d="M3 8.500h5" stroke="#444"/></svg>
    </div>
  </div>
  <div class="h-1.5 shrink-0 bg-black"></div>
</div>

<script>
const $ = (id) => document.getElementById(id);
const icon = (name, cls = "size-[11px] shrink-0") => `<svg class="${cls}"><use href="#${name}"/></svg>`;

$("menus").innerHTML = ["Project", "Edit", "View", "Tools", "Debug", "Validation", "Window", "Help"]
  .map((m) => `<button class="px-[6px]">${m}</button>`).join("");

// "|" separator, ":" grip, "*" marks a pressed button
function toolbar(list) {
  return list.split(" ").map((t) => {
    if (t == "|") return `<span class="mx-[2px] h-[10px] w-px bg-[#aaa6a0]"></span>`;
    if (t == ":") return `<span class="mx-[2px] h-[11px] border-l-2 border-dotted border-[#9a958e]"></span>`;
    if (t[0] == "*") return `<button aria-label="${t.slice(1)}" class="flex h-[15px] w-[15px] items-center justify-center border border-[#3c4c80] bg-[#c0c8e0]">${icon(t.slice(1))}</button>`;
    return `<button aria-label="${t}" class="flex h-[15px] w-[15px] items-center justify-center">${icon(t)}</button>`;
  }).join("");
}
$("tools1").innerHTML = toolbar(": new open *saveall | cut copy paste | print | where | *cube cubeoff win *wins cascade tile |");
$("tools2").innerHTML = toolbar("| chk chk2 ok helpoff | left right | gold | help : clockoff | nodeoff | step1 step2 step2 | hop hop2 hop2 | *debug handoff hand | varoff winoff gridoff");
$("palette").innerHTML = `<span class="my-px w-3 border-t-2 border-dotted border-[#9a958e]"></span>` +
  toolbar("*pointer arrowoff flow flowblue query table tmpl o1 o2 o3 o4 o5 o6 note");

// guides: one letter for each indent level
const cells = { "|": "line", t: "tee", l: "elbow", "+": "plus", "-": "minus" };
function treeItem([guides, ico, text, selected]) {
  const g = [...guides].map((c) => {
    if (c == "+" || c == "-") return `<button aria-label="${c == "+" ? "Expand" : "Collapse"} ${text.split("(")[0]}">${icon(cells[c], "block h-3 w-[13px]")}</button>`;
    return c == " " ? `<span class="w-[13px]"></span>` : icon(cells[c], "h-3 w-[13px] shrink-0");
  }).join("");
  return `<div class="flex h-3 items-center whitespace-nowrap">${g}${icon(ico)}<span class="${selected ? "ml-[2px] h-[11px] bg-[#d6d3ce] px-px leading-[11px]" : "ml-[3px]"}">${text}</span></div>`;
}

$("project").innerHTML = [
  ["-", "folder", "KKS_Batch10"],
  [" -", "job", "Job_B10_Case_TF"],
  [" |-", "flow", "DF_case_B10_TF"],
  [" | +", "file", "FF_CASE_TF_B10"],
  [" | t", "query", "Query"],
  [" | t", "case", "Case", true],
  [" | +", "table", 'TT_B10_hyderabad("___________DS_SQL_SRC".dbo)'],
  [" | +", "table", 'tt_b10_bangalore("___________DS_SQL_SRC".dbo)'],
  [" | +", "table", 'tt_B10_rest_all("___________DS_SQL_SRC".dbo)'],
  [" +", "job", "Job_Exce_Ext"],
  [" +", "job", "Job_excel_ext_jakeer"],
  [" +", "job", "JOb_EXCEL_Import"],
  [" +", "job", "Job_Export_Data"],
].map(treeItem).join("");

$("library").innerHTML = [
  ["+", "grp1", "Data Integrator", ""],
  ["+", "grp2", "Data Quality", ""],
  ["-", "grp3", "Platform", ""],
  ["|t", "case", "Case", "Defines the processing of different rows in different ma", true],
  ["|+", "mask", "Data_Mask", "Data Mask Base Transform"],
  ["|+", "globe", "DQM_Microserv...", "DQM Microservices Base Transform"],
  ["|t", "mapop", "Map_Operation", "Modifies data based on current mapping expressions ar"],
  ["|t", "merge", "Merge", "Combines incoming data sets, producing a single output"],
  ["|t", "query", "Query", "Retrieves a data set that satisfies conditions that you s"],
  ["|t", "rowgen", "Row_Generation", "Generates a column filled with int values starting at zero"],
  ["|t", "sql", "SQL", "Performs the indicated SQL query operation when it car"],
  ["|+", "userdef", "User_Defined", "User Defined Base Transform"],
  ["|t", "valid", "Validation", "Routes incoming data based on validation conditions yo"],
  ["|l", "xml", "XML_Map", "Maps NRDM schemas."],
  ["+", "grp4", "Text Data Processing", ""],
].map(([g, i, t, d, s]) => `<tr class="h-3"><td colspan="2" class="p-0 pl-px">${treeItem([g, i, t, s])}</td><td class="overflow-hidden p-0 pl-[3px] whitespace-nowrap">${d}</td></tr>`).join("");

$("areaTabs").innerHTML = [["design", "Designer", true], ["monitor", "Monitor"], ["log", "Log"]]
  .map(([i, t, on]) => `<button class="${on
    ? "flex h-[15px] items-center gap-[2px] border-r border-b border-[#222] bg-[#eeebe8] px-[2px]"
    : "my-[2px] flex h-[11px] items-center gap-px border-r border-[#999] px-[3px] text-[#8a8a8a]"}">${icon(i)}${t}</button>`).join("");

$("libTabs").innerHTML = [["folder", "Proje..."], ["job", "Jobs"], ["arrow", "Work..."], ["flow", "Data ..."], ["query", "Tran...", true], ["db", "Data..."], ["format", "Form..."], ["fx", "Cust..."]]
  .map(([i, t, on]) => `<button class="${on
    ? "flex h-[15px] w-10 items-center gap-px border-r border-b border-[#222] bg-[#faf8f6] px-px whitespace-nowrap"
    : "my-[2px] flex h-[11px] w-10 items-center gap-px border-r border-[#999] px-[2px] whitespace-nowrap text-[#8a8a8a]"}">${icon(i)}${t}</button>`).join("");

// target tables, each with the name of the case branch that feeds it
$("targets").innerHTML = [
  [575, 116, "TT_B10_hyderabad(...", 533, 127, "Hyderabad"],
  [586, 218, "tt_b10_bangalore(...", 546, 241, "Bangalore"],
  [583, 336, "tt_B10_rest_all(\"...", 554, 359, "default"],
].map(([x, y, name, bx, by, branch]) => `
  <div class="absolute font-['Liberation_Sans',sans-serif] leading-[10px]" style="left:${x}px;top:${y}px">
    <p class="pl-px">${name}</p>
    <div class="flex h-[25px] w-8 items-center justify-center gap-px border border-[#8a9cb4] bg-[#eaf4fb]">${icon("play", "h-[13px] w-[10px]")}${icon("tbl", "size-[15px]")}</div>
  </div>
  <span class="absolute font-['Liberation_Sans',sans-serif] leading-[10px]" style="left:${bx}px;top:${by}px">${branch}</span>`).join("");
</script>
</body>
</html>
